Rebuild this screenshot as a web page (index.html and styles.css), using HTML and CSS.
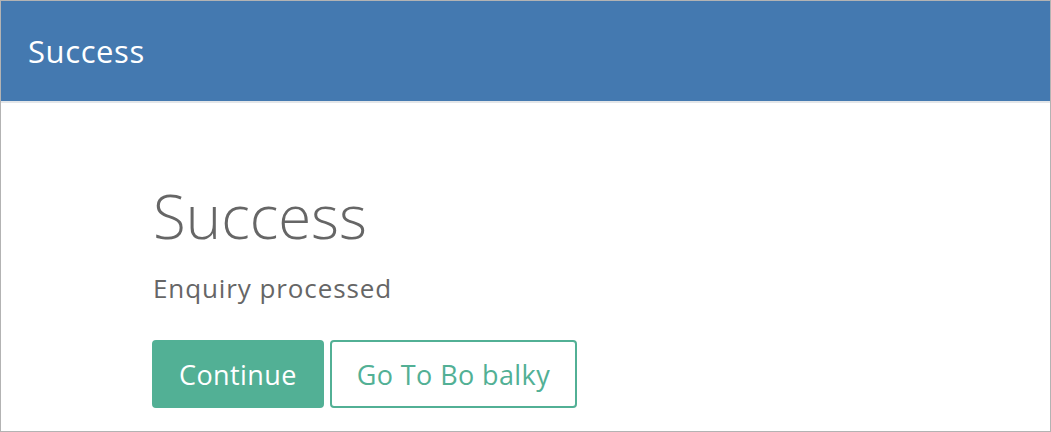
FILE: index.html
```html
<!DOCTYPE html>
<html>
<head>
<meta charset="utf-8">
<link rel="stylesheet" href="styles.css">
</head>
<body>
<div class="frame">
  <header class="topbar"><h1 class="topbar-title">Success</h1></header>
  <main class="content">
    <h2 class="title">Success</h2>
    <p class="message">Enquiry processed</p>
    <div class="actions">
      <button class="btn btn-primary">Continue</button>
      <button class="btn btn-outline">Go To Bo balky</button>
    </div>
  </main>
</div>
</body>
</html>
```
FILE: styles.css
```css
html, body { margin: 0; padding: 0; background: #fff; }
body { font-family: "Open Sans", "Noto Sans", sans-serif; }
.frame {
  width: 1049px;
  height: 430px;
  border: 1px solid #b3b3b3;
  box-sizing: content-box;
  overflow: hidden;
}
.topbar {
  height: 100px;
  background: #4479b0;
  border-bottom: 2px solid #e3e6e9;
  display: flex;
  align-items: center;
  padding-left: 27px;
}
.topbar-title {
  margin: 0;
  color: #fff;
  font-size: 31px;
  font-weight: 400;
  letter-spacing: 0.6px;
}
.content { padding: 73px 0 0 151px; }
.title {
  margin: 0 0 0 1px;
  font-size: 60px;
  font-weight: 300;
  color: #666;
  line-height: 80px;
}
.message {
  margin: 16px 0 0 1px;
  font-size: 26px;
  color: #666;
  line-height: 32px;
  letter-spacing: 0.9px;
}
.actions { display: flex; gap: 6px; margin-top: 36px; }
.btn {
  font-family: inherit;
  font-size: 27px;
  letter-spacing: 0.4px;
  height: 68px;
  border-radius: 4px;
  padding: 0 25px;
  box-sizing: border-box;
  cursor: pointer;
}
.btn-primary { background: #52b095; color: #fff; border: 2px solid #52b095; }
.btn-outline { background: #fff; color: #52b095; border: 2px solid #52b095; }
```
